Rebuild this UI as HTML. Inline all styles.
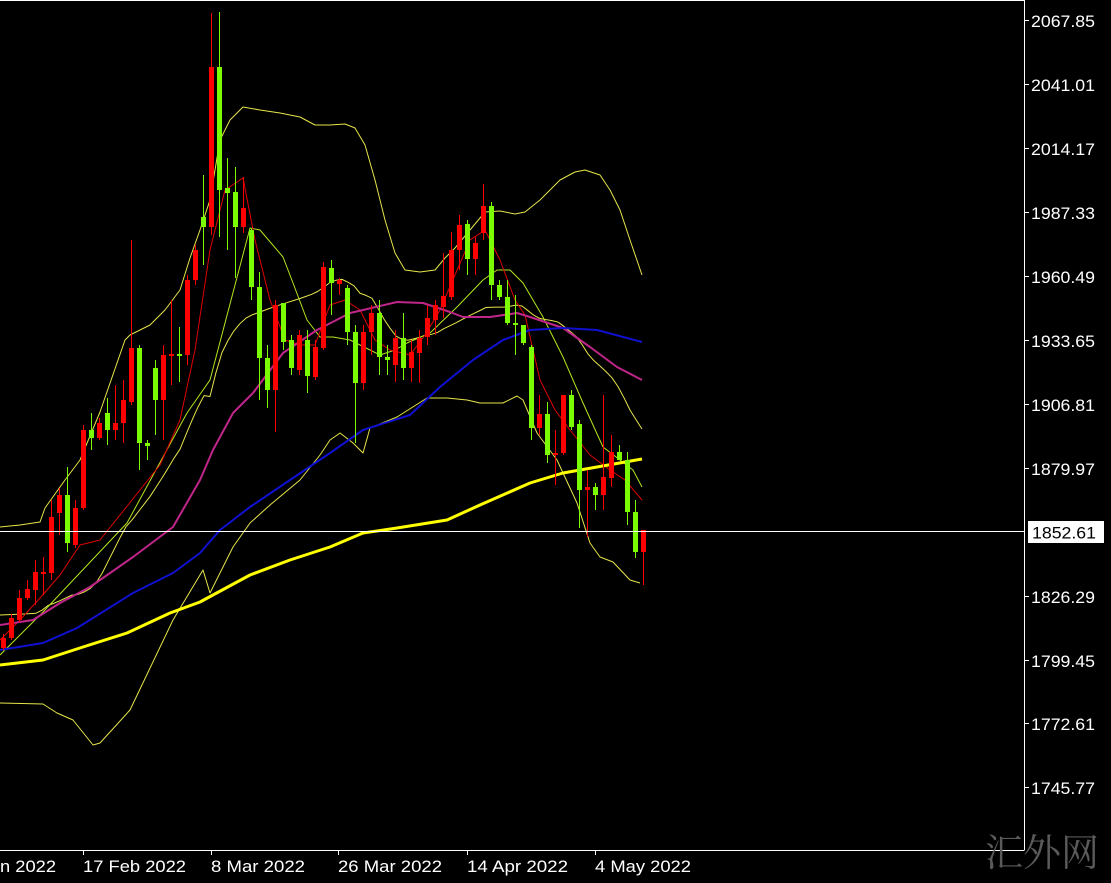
<!DOCTYPE html>
<html><head><meta charset="utf-8">
<style>
html,body{margin:0;padding:0;background:#000;width:1111px;height:883px;overflow:hidden}
svg{display:block}
text{font-family:"Liberation Sans","DejaVu Sans",sans-serif;fill:#fff}
</style></head>
<body>
<svg id="s" width="1111" height="883" xmlns="http://www.w3.org/2000/svg">
<rect width="1111" height="883" fill="#000"/>
<g id="lines"></g>
<g id="candles"></g>
<line x1="0" y1="531.5" x2="1024" y2="531.5" stroke="#fff" stroke-width="1"/>
<line x1="1024.5" y1="0" x2="1024.5" y2="850" stroke="#fff"/>
<line x1="0" y1="850.5" x2="1024.5" y2="850.5" stroke="#fff"/>
<line x1="0" y1="0.5" x2="1024.5" y2="0.5" stroke="#fff"/>
<g id="axis"></g>
<rect x="1028" y="521" width="76" height="22" fill="#fff"/>
<text x="1032" y="538.5" font-size="17" textLength="64" lengthAdjust="spacingAndGlyphs" style="fill:#000">1852.61</text>
<g id="dates"></g>
<text x="985" y="866" font-size="38" style="fill:#5a5a5a;font-family:'Noto Serif CJK SC','Liberation Serif',serif">汇外网</text>
</svg>
<script>
var NS="http://www.w3.org/2000/svg";
function el(t,a,p){var e=document.createElementNS(NS,t);for(var k in a)e.setAttribute(k,a[k]);p.appendChild(e);return e;}
var R="#ff0000",G="#7cfc00";
var c=[
[638,648,634,650,R],[618,638,614,640,R],[598,620,590,622,R],[589,598,580,600,R],[572,590,560,605,R],
[572,574,557,595,R],[517,573,500,580,R],[495,513,488,535,R],[495,543,467,552,G],[508,545,500,548,R],
[430,508,425,510,R],[430,438,413,450,G],[423,438,418,440,R],[413,430,398,445,G],[423,430,385,440,R],
[400,423,380,443,R],[348,402,240,405,R],[348,443,345,470,G],[443,446,440,460,G],[368,400,360,435,G],
[355,400,345,440,R],[354,356,300,385,R],[354,356,327,382,G],[280,355,275,365,R],[250,280,245,285,R],
[217,227,175,265,G],[67,227,13,235,R],[67,190,12,237,G],[188,193,158,250,G],[192,227,167,278,G],
[208,227,177,233,R],[230,287,228,300,G],[287,358,272,400,G],[358,390,345,408,G],[305,390,300,432,R],
[303,342,303,350,G],[340,368,335,375,G],[335,370,330,375,R],[340,376,330,393,G],[347,377,340,380,R],
[267,348,262,350,R],[268,283,260,315,G],[280,284,278,295,R],[288,332,285,345,G],[332,383,325,443,G],
[332,383,325,390,R],[313,332,305,355,R],[313,357,300,375,G],[357,360,345,375,G],[338,365,330,382,R],
[338,368,313,380,G],[352,368,340,382,R],[338,353,330,383,R],[318,337,305,345,R],[305,320,300,335,R],
[296,307,253,318,R],[250,297,232,300,R],[225,250,215,270,R],[224,259,220,275,G],[243,259,237,275,R],
[206,233,184,240,R],[206,285,202,300,G],[285,297,280,300,G],[297,323,280,325,G],[323,325,295,355,G],
[325,343,325,345,G],[347,428,345,440,G],[414,428,395,435,R],[414,455,402,463,G],[453,455,430,485,R],
[395,453,395,455,R],[395,427,390,430,G],[424,490,420,528,G],[487,490,470,537,R],[487,495,483,510,G],
[477,495,395,510,R],[452,478,435,487,R],[452,460,445,460,G],[460,512,452,525,G],[512,552,500,558,G],
[530,552,530,585,R]];
var cg=document.getElementById("candles");
c.forEach(function(d,i){var x=3+8*i;
el("line",{x1:x+0.5,y1:d[2],x2:x+0.5,y2:d[3],stroke:d[4],"stroke-width":1},cg);
el("rect",{x:x-2,y:d[0],width:5,height:Math.max(2,d[1]-d[0]),fill:d[4]},cg);});
var lg=document.getElementById("lines");
function pl(pts,col,w){el("polyline",{points:pts.map(function(p){return p.join(",")}).join(" "),fill:"none",stroke:col,"stroke-width":w,"stroke-linejoin":"round"},lg);}
var up=[[0,527],[20,525],[40,522],[45,508],[65,480],[80,460],[100,412],[125,340],[130,335],[150,325],[165,310],[180,290],[190,258],[200,230],[210,200],[220,140],[230,120],[243,107],[260,110],[280,113],[300,117],[315,125],[330,125],[345,124],[355,128],[365,145],[375,180],[385,220],[395,253],[405,270],[420,272],[435,270],[445,258],[455,248],[470,230],[485,212],[500,211],[515,214],[525,212],[540,200],[560,180],[575,172],[585,170],[600,175],[610,190],[620,210],[630,240],[642,275]];
var lo=[[0,703],[43,704],[57,713],[73,720],[93,745],[100,743],[130,710],[173,620],[203,570],[210,593],[233,547],[250,523],[270,505],[300,480],[320,455],[330,440],[340,433],[353,443],[363,453],[370,428],[397,417],[427,398],[447,398],[467,400],[480,403],[503,403],[517,396],[523,400],[537,433],[557,460],[577,503],[590,543],[600,557],[613,562],[630,580],[640,583]];
function interp(arr,x){for(var i=0;i<arr.length-1;i++){if(x>=arr[i][0]&&x<=arr[i+1][0]){var t=(x-arr[i][0])/(arr[i+1][0]-arr[i][0]);return arr[i][1]+t*(arr[i+1][1]-arr[i][1]);}}return arr[arr.length-1][1];}
var mid=[];for(var x=0;x<=642;x+=6){mid.push([x,(interp(up,x)+interp(lo,x))/2]);}
pl(up,"#e6e64a",1);pl(lo,"#e6e64a",1);pl(mid,"#e6e64a",1);
pl([[0,655],[43,612],[127,523],[187,413],[210,380],[250,228],[260,230],[283,257],[293,283],[307,320],[320,337],[333,337],[350,340],[380,355],[395,350],[407,343],[430,333],[457,307],[483,280],[497,270],[510,270],[523,283],[543,317],[563,357],[583,403],[603,447],[620,460],[633,470],[642,487]],"#b5e61d",1);
pl([[0,640],[20,620],[40,598],[60,575],[80,545],[100,540],[120,515],[140,490],[160,465],[180,420],[195,350],[210,250],[225,190],[243,178],[255,240],[270,300],[285,340],[300,345],[315,345],[330,305],[345,300],[360,310],[375,340],[390,350],[410,355],[425,335],[440,310],[455,275],[470,240],[485,230],[500,260],[515,300],[525,315],[540,380],[555,410],[570,430],[590,455],[610,470],[625,480],[642,500]],"#e00000",1);
pl([[0,625],[33,620],[60,603],[90,587],[133,557],[173,527],[200,480],[213,450],[233,413],[253,393],[283,353],[317,330],[350,313],[363,310],[397,302],[423,303],[450,312],[463,317],[490,317],[517,313],[530,317],[563,328],[590,347],[617,367],[642,380]],"#c0268a",2);
pl([[0,650],[43,643],[77,628],[133,593],[173,573],[200,553],[220,530],[250,507],[290,480],[330,453],[363,430],[410,415],[440,387],[473,360],[503,340],[530,330],[563,328],[597,330],[642,342]],"#1010d0",2);
pl([[0,665],[43,660],[83,647],[127,633],[170,613],[200,602],[250,575],[290,560],[330,547],[363,533],[397,528],[447,520],[480,505],[530,483],[563,473],[597,467],[642,459]],"#ffff00",3);
var ax=document.getElementById("axis");
var labs=[["2067.85",20],["2041.01",84],["2014.17",148],["1987.33",212],["1960.49",276],["1933.65",340],["1906.81",404],["1879.97",468],["1826.29",596],["1799.45",660],["1772.61",723],["1745.77",787]];
labs.forEach(function(l){el("line",{x1:1024,y1:l[1]+0.5,x2:1029,y2:l[1]+0.5,stroke:"#fff"},ax);
var t=el("text",{x:1031,y:l[1]+7,"font-size":17,textLength:64,lengthAdjust:"spacingAndGlyphs"},ax);t.textContent=l[0];});
var dg=document.getElementById("dates");
var ds=[["n 2022",-1,56],["17 Feb 2022",83,103],["8 Mar 2022",211,94],["26 Mar 2022",338,104],["14 Apr 2022",467,101],["4 May 2022",595,96]];
ds.forEach(function(d){if(d[1]>0)el("line",{x1:d[1]+0.5,y1:850,x2:d[1]+0.5,y2:855,stroke:"#fff"},dg);
var t=el("text",{x:Math.max(0,d[1]),y:872,"font-size":17,textLength:d[2],lengthAdjust:"spacingAndGlyphs"},dg);t.textContent=d[0];});
</script>
</body></html>
